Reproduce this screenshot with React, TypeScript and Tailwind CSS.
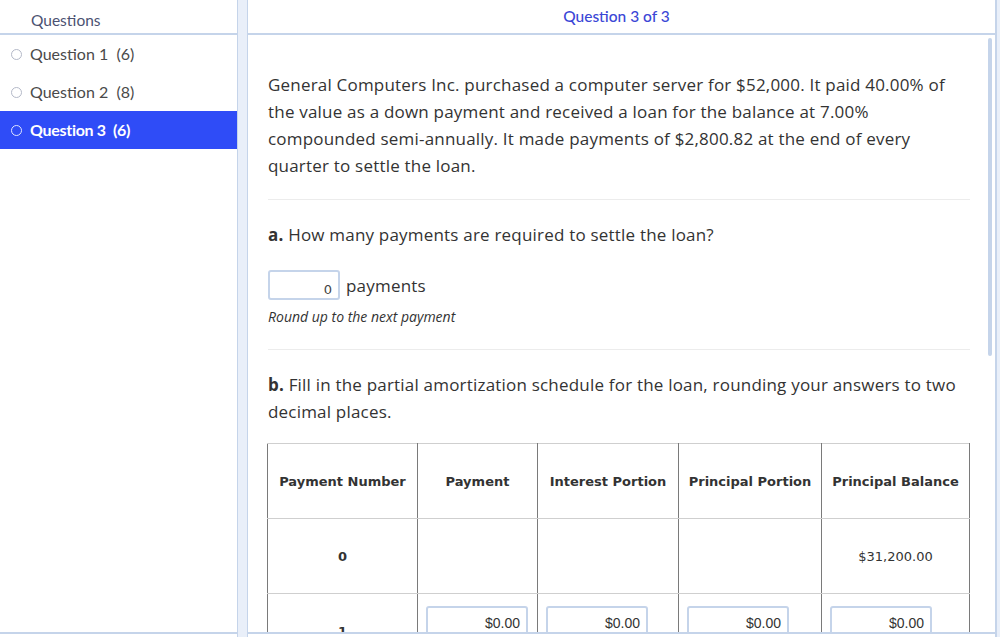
import { ReactNode } from "react";

const questions = [
  { label: "Question 1", pts: 6 },
  { label: "Question 2", pts: 8 },
  { label: "Question 3", pts: 6, active: true },
];

function Sidebar() {
  return (
    <div className="flex w-[237px] shrink-0 flex-col border-b-2 border-[#c5d4ea] font-['Lato',sans-serif]">
      <div className="flex h-[35px] items-center border-b-2 border-[#c5d4ea] pl-[31px] pt-[8px] text-[15.5px] text-[#4b5272]">
        Questions
      </div>
      {questions.map((q) => (
        <div
          key={q.label}
          className={`flex h-[38px] items-center gap-[8px] pl-[11px] text-[16px] ${
            q.active ? "bg-[#2f4cf7] font-bold tracking-[-0.3px] text-white" : "text-[#4a4a4a]"
          }`}
        >
          <span
            className={`h-[11px] w-[11px] rounded-full border ${
              q.active ? "border-[#dfe5ff]" : "border-[#b4b9c8]"
            }`}
          />
          <span>
            {q.label}&nbsp;&nbsp;({q.pts})
          </span>
        </div>
      ))}
      <div className="flex-1" />
    </div>
  );
}

function Cell({ children, head, input }: { children?: ReactNode; head?: boolean; input?: boolean }) {
  return (
    <td
      className={`h-[75px] border-x border-x-[#7a7a7a] border-y border-y-[#cfcfcf] px-2 text-[13px] text-[#333] ${
        head ? "font-bold" : ""
      } ${input ? "pt-[12px] text-left align-top" : "text-center align-middle"}`}
    >
      {children}
    </td>
  );
}

function MoneyInput() {
  return (
    <div className="h-[30px] w-[102px] rounded-[3px] border-2 border-[#c5d4ea] pr-[6px] pt-[2px] text-right font-['Liberation_Sans',sans-serif] text-[14px] text-[#333]">
      $0.00
    </div>
  );
}

function Main() {
  return (
    <div className="relative flex min-w-0 flex-1 flex-col overflow-hidden border-b-2 border-[#c5d4ea]">
      <div className="flex h-[35px] shrink-0 items-center justify-center border-b-2 border-[#c5d4ea] pr-[10px] font-['Lato',sans-serif] text-[15.5px] font-medium text-[#3b47d6]">
        Question 3 of 3
      </div>
      <div className="absolute right-[3px] top-[38px] h-[318px] w-[4px] rounded-full bg-[#c5d4ea]" />
      <div className="w-[722px] pl-[20px] pt-[36px] font-['Open_Sans',sans-serif] text-[17px] leading-[27px] tracking-[0.2px] text-[#333]">
        <p>
          General Computers Inc. purchased a computer server for $52,000. It paid 40.00% of the value as a down
          payment and received a loan for the balance at 7.00% compounded semi-annually. It made payments of
          $2,800.82 at the end of every quarter to settle the loan.
        </p>
        <hr className="mt-[20px] border-[#ececec]" />
        <p className="mt-[21px]">
          <b>a.</b> How many payments are required to settle the loan?
        </p>
        <div className="mt-[22px] flex items-center gap-[6px]">
          <div className="h-[30px] w-[72px] rounded-[3px] border-2 border-[#c5d4ea] pr-[6px] pt-[4px] text-right font-['DejaVu_Sans',sans-serif] text-[13px] tracking-normal text-[#444]">
            0
          </div>
          <span>payments</span>
        </div>
        <p className="mt-[7px] text-[14px] italic leading-[20px] tracking-normal text-[#333]">
          Round up to the next payment
        </p>
        <hr className="mt-[22px] border-[#ececec]" />
        <p className="mt-[21px]">
          <b>b.</b> Fill in the partial amortization schedule for the loan, rounding your answers to two decimal
          places.
        </p>
        <table className="ml-[-1px] mt-[18px] w-[702px] table-fixed border-collapse font-['DejaVu_Sans',sans-serif] tracking-normal">
          <colgroup>
            <col className="w-[150px]" />
            <col className="w-[120px]" />
            <col className="w-[141px]" />
            <col className="w-[143px]" />
            <col className="w-[148px]" />
          </colgroup>
          <tbody>
            <tr>
              <Cell head>Payment Number</Cell>
              <Cell head>Payment</Cell>
              <Cell head>Interest Portion</Cell>
              <Cell head>Principal Portion</Cell>
              <Cell head>Principal Balance</Cell>
            </tr>
            <tr>
              <Cell head>0</Cell>
              <Cell />
              <Cell />
              <Cell />
              <Cell>$31,200.00</Cell>
            </tr>
            <tr>
              <Cell head>1</Cell>
              <Cell input>
                <MoneyInput />
              </Cell>
              <Cell input>
                <MoneyInput />
              </Cell>
              <Cell input>
                <MoneyInput />
              </Cell>
              <Cell input>
                <MoneyInput />
              </Cell>
            </tr>
          </tbody>
        </table>
      </div>
    </div>
  );
}

export default function App() {
  return (
    <div className="flex h-[637px] w-[1000px] overflow-hidden bg-white pb-[3px]">
      <Sidebar />
      <div className="-mb-[3px] w-[11px] shrink-0 border-x border-[#c5d4ea] bg-[#e9eff9]" />
      <Main />
      <div className="-mb-[3px] w-[5px] shrink-0 border-l-2 border-[#c5d4ea] bg-[#e9eff9]" />
    </div>
  );
}
